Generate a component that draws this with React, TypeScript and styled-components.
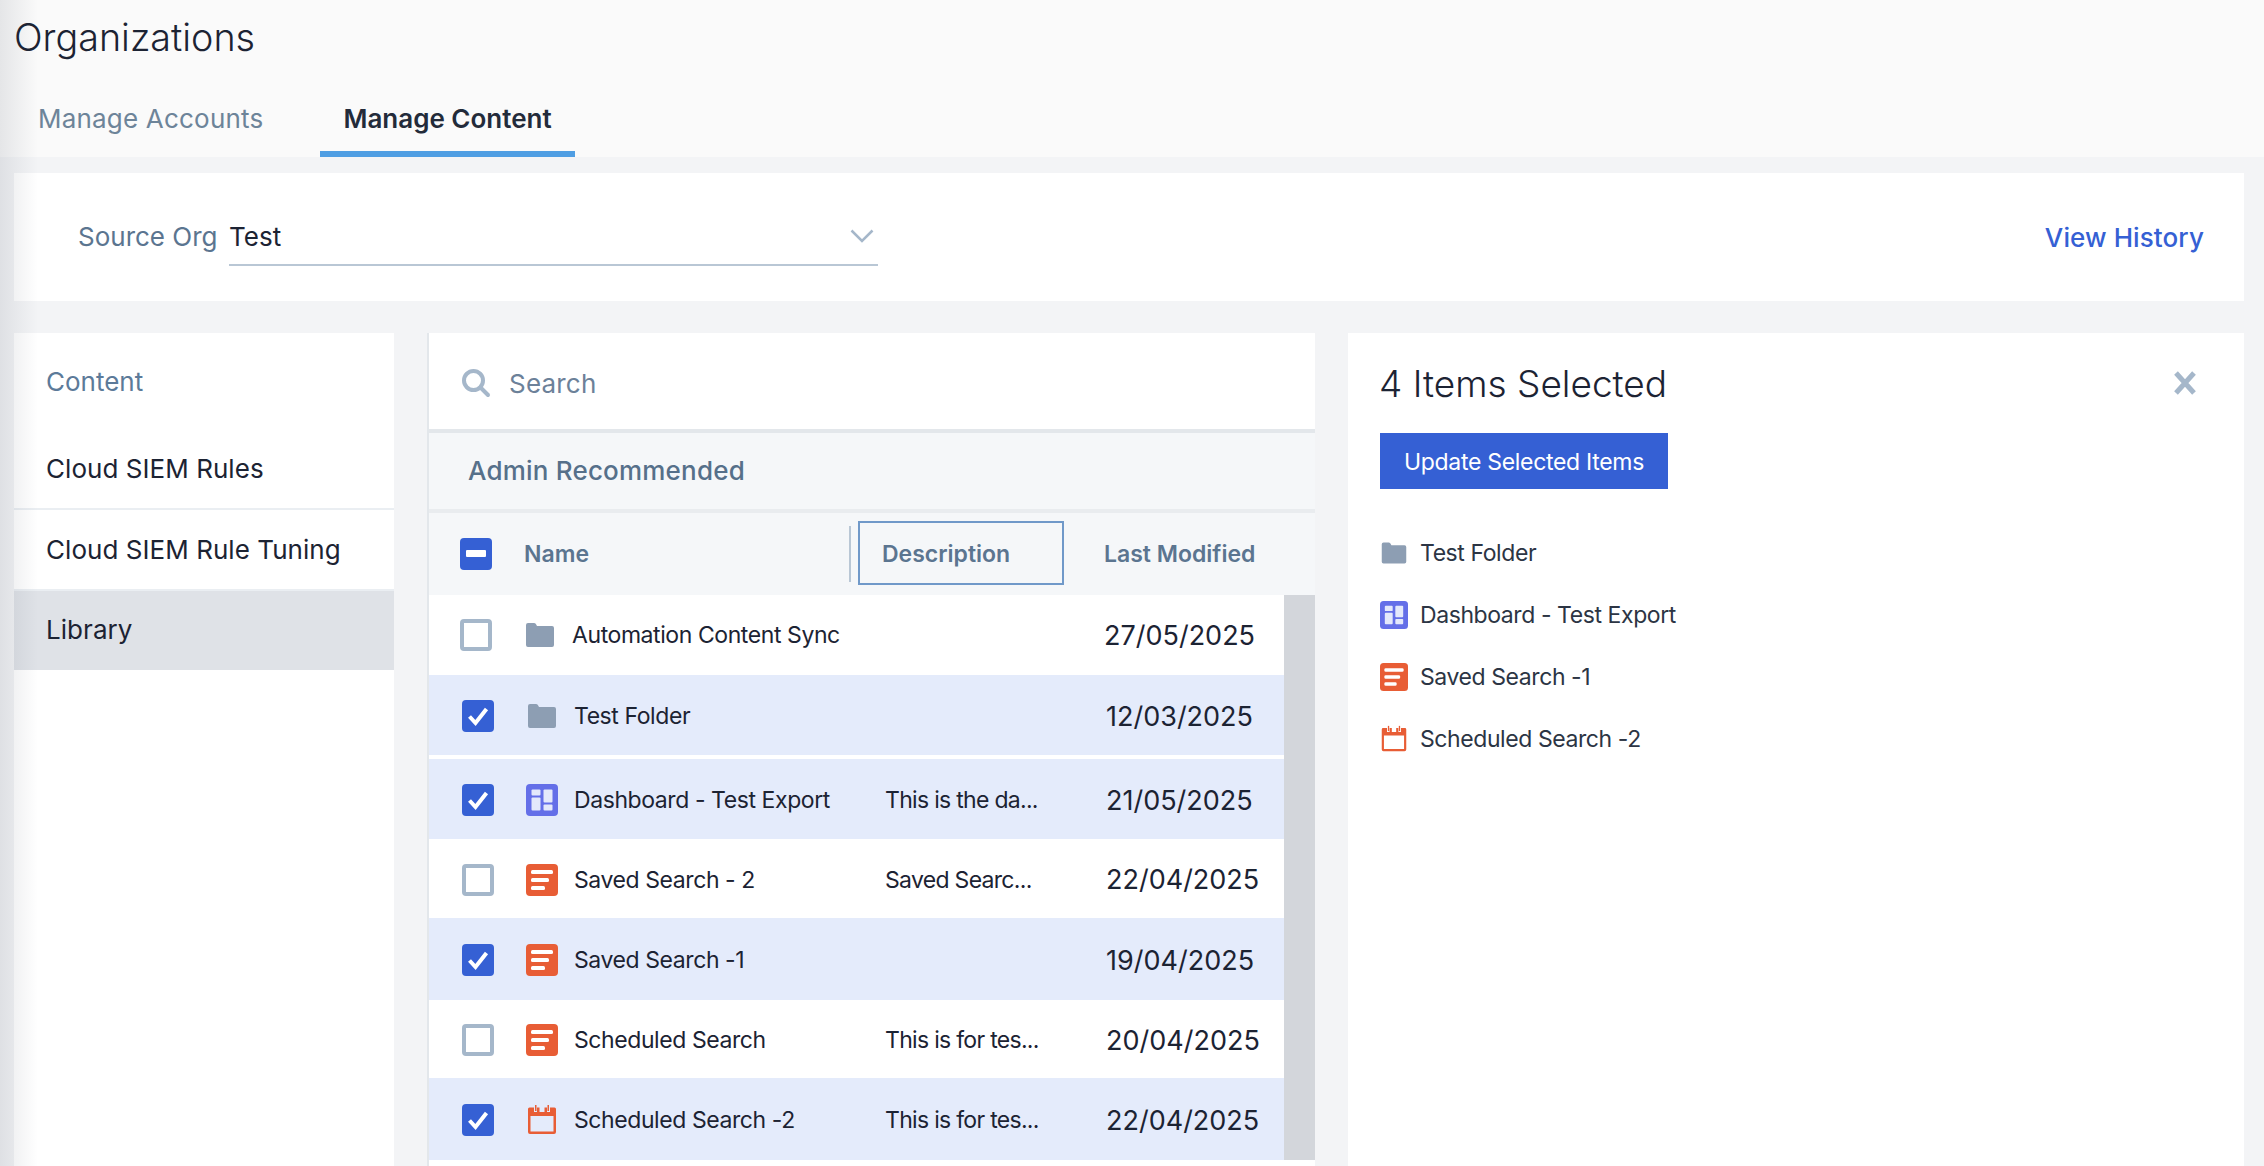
import React from 'react';
import styled, { createGlobalStyle } from 'styled-components';

const GlobalStyle = createGlobalStyle`
    html, body {
        margin: 0;
        padding: 0;
        background: #f3f4f6;
        font-family: 'Inter', 'Liberation Sans', sans-serif;
    }
`;

const Colors = {
    ink: '#1c2333',
    slate: '#5b7590',
    muted: '#a5b7ca',
    blue: '#3560d4',
    tint: '#e4ebfb',
    orange: '#e85d35',
    indigo: '#646fe8',
    folder: '#8d9eb3',
};

const Page = styled.div`
    position: relative;
    width: 2264px;
    height: 1166px;
    overflow: hidden;
    background: #f3f4f6;

    &::before {
        content: '';
        position: absolute;
        top: 0;
        left: 0;
        bottom: 0;
        width: 38px;
        background: linear-gradient(to right, rgba(40, 50, 70, 0.1), rgba(40, 50, 70, 0));
        pointer-events: none;
        z-index: 5;
    }
`;

const Header = styled.header`
    height: 157px;
    box-sizing: border-box;
    background: #fafafa;
    padding-left: 14px;
`;

const Title = styled.h1`
    margin: 0;
    height: 74px;
    line-height: 74px;
    font-size: 37.7px;
    font-weight: 300;
    color: ${Colors.ink};
`;

const Tabs = styled.nav`
    display: flex;
    height: 83px;
    margin-left: 10px;
`;

const Tab = styled.div<{ $active?: boolean }>`
    box-sizing: border-box;
    height: 83px;
    padding: 0 ${(p) => (p.$active ? 23 : 14)}px;
    margin-right: ${(p) => (p.$active ? 0 : 43)}px;
    line-height: 90px;
    font-size: 26px;
    letter-spacing: ${(p) => (p.$active ? 0 : 0.2)}px;
    font-weight: ${(p) => (p.$active ? 600 : 400)};
    color: ${(p) => (p.$active ? '#232b3a' : '#6d8499')};
    border-bottom: 6px solid ${(p) => (p.$active ? '#4f9ee3' : 'transparent')};
`;

const Main = styled.main`
    padding: 16px 20px 0 14px;
`;

const SourceCard = styled.section`
    display: flex;
    align-items: center;
    height: 128px;
    padding: 0 40px 0 64px;
    background: #fff;
`;

const SourceLabel = styled.span`
    width: 151px;
    margin-top: -2px;
    font-size: 26px;
    color: ${Colors.slate};
`;

const Select = styled.div`
    display: flex;
    align-items: center;
    justify-content: space-between;
    box-sizing: border-box;
    width: 649px;
    height: 58px;
    padding-right: 4px;
    border-bottom: 2px solid #b9c7d5;
    font-size: 26px;
    color: ${Colors.ink};
`;

const HistoryLink = styled.a`
    margin-left: auto;
    font-size: 26px;
    font-weight: 500;
    letter-spacing: 0.1px;
    color: ${Colors.blue};
`;

const Columns = styled.div`
    display: flex;
    margin-top: 32px;
    height: 840px;
`;

const Sidebar = styled.aside`
    width: 380px;
    background: #fff;
    margin-right: 33px;
`;

const SidebarTitle = styled.div`
    height: 96px;
    padding: 0 32px;
    line-height: 98px;
    font-size: 26px;
    color: #5c7a99;
`;

const SidebarItem = styled.div<{ $active?: boolean; $divider?: boolean }>`
    box-sizing: border-box;
    height: ${(p) => (p.$divider ? 81 : 79)}px;
    padding: 0 32px;
    line-height: ${(p) => (p.$active ? 78 : 80)}px;
    font-size: 26px;
    letter-spacing: 0.05px;
    color: ${Colors.ink};
    background: ${(p) => (p.$active ? '#dfe2e7' : '#fff')};
    border-bottom: ${(p) => (p.$divider ? '2px solid #eaeef2' : 'none')};
`;

const Center = styled.section`
    width: 888px;
    margin-right: 33px;
    background: #fff;
    border-left: 2px solid #e3e7eb;
    box-sizing: border-box;
`;

const SearchBar = styled.div`
    display: flex;
    align-items: center;
    box-sizing: border-box;
    height: 100px;
    padding: 4px 0 0 32px;
    border-bottom: 4px solid #e3e7eb;
    font-size: 26px;
    color: #6c8199;
`;

const SearchText = styled.span`
    margin-left: 18px;
    letter-spacing: 0.2px;
`;

const SectionBar = styled.div`
    box-sizing: border-box;
    height: 80px;
    padding-left: 39px;
    line-height: 76px;
    background: #f5f7f9;
    border-bottom: 4px solid #e9ecef;
    font-size: 26px;
    letter-spacing: 0.2px;
    font-weight: 500;
    color: #56708a;
`;

const TableHead = styled.div`
    display: flex;
    align-items: center;
    height: 82px;
    padding-left: 31px;
    background: #f5f7f9;
    font-size: 23px;
    font-weight: 600;
    color: ${Colors.slate};
`;

const NameHead = styled.span`
    margin-left: 32px;
    width: 325px;
`;

const ColumnRule = styled.span`
    width: 2px;
    height: 56px;
    background: #b9c7d5;
`;

const DescriptionHead = styled.span`
    box-sizing: border-box;
    width: 206px;
    height: 64px;
    margin: -2px 0 0 7px;
    padding-left: 22px;
    line-height: 62px;
    border: 2px solid #7099c9;
`;

const LastModifiedHead = styled.span`
    margin-left: 40px;
`;

const TableBody = styled.div`
    display: flex;
`;

const Rows = styled.div`
    width: 855px;
`;

const Scrollbar = styled.div`
    width: 31px;
    height: 565px;
    background: #d3d6db;
`;

const Row = styled.div<{ $height: number; $selected: boolean; $gap?: boolean; $first?: boolean }>`
    display: grid;
    grid-template-columns: 64px 48px 311px 221px 1fr;
    align-items: center;
    box-sizing: border-box;
    height: ${(p) => p.$height}px;
    margin-top: ${(p) => (p.$gap ? 4 : 0)}px;
    padding: ${(p) => (p.$first ? '0 0 0 31px' : '2px 0 0 33px')};
    background: ${(p) => (p.$selected ? Colors.tint : '#fff')};
    font-size: 23px;
    letter-spacing: -0.42px;
    color: ${Colors.ink};
`;

const RowDescription = styled.span`
    letter-spacing: -0.7px;
`;

const RowDate = styled.span`
    font-size: 27px;
    letter-spacing: 0;
`;

const CheckBox = styled.span<{ $on?: boolean }>`
    display: flex;
    align-items: center;
    justify-content: center;
    box-sizing: border-box;
    width: 32px;
    height: 32px;
    border-radius: 4px;
    background: ${(p) => (p.$on ? Colors.blue : '#fff')};
    border: ${(p) => (p.$on ? 'none' : `4px solid ${Colors.muted}`)};
`;

const Detail = styled.section`
    flex: 1;
    box-sizing: border-box;
    padding: 0 32px;
    background: #fff;
`;

const DetailHead = styled.div`
    display: flex;
    align-items: center;
    justify-content: space-between;
    height: 100px;
    padding-right: 15px;
`;

const DetailTitle = styled.h2`
    margin: 0 0 0 -1px;
    font-size: 37px;
    font-weight: 300;
    color: ${Colors.ink};
`;

const UpdateButton = styled.button`
    display: block;
    width: 288px;
    height: 56px;
    padding: 2px 0 0;
    border: 0;
    background: ${Colors.blue};
    color: #fff;
    font-family: inherit;
    font-size: 23px;
    letter-spacing: -0.3px;
`;

const SelectedList = styled.ul`
    margin: 33px 0 0;
    padding: 0;
    list-style: none;
`;

const SelectedItem = styled.li`
    display: flex;
    align-items: center;
    height: 62px;
    font-size: 23px;
    letter-spacing: -0.42px;
    color: #2c3544;
`;

const SelectedIcon = styled.span`
    display: flex;
    width: 40px;
`;

type Kind = 'folder' | 'dashboard' | 'saved' | 'scheduled';

const ItemIcon = ({ kind, size = 32 }: { kind: Kind; size?: number }) => {
    if (kind === 'folder') {
        return (
            <svg width={size} height={size} viewBox="0 0 32 32" fill={Colors.folder}>
                <path d="M2 6a2 2 0 0 1 2-2h6c1.500 0 2 1 3 3h15a2 2 0 0 1 2 2v17a2 2 0 0 1-2 2H4a2 2 0 0 1-2-2z" />
            </svg>
        );
    }
    if (kind === 'dashboard') {
        return (
            <svg width={size} height={size} viewBox="0 0 32 32">
                <rect width="32" height="32" rx="4" fill={Colors.indigo} />
                <g fill="#e4e9fb">
                    <rect x="5.500" y="5.500" width="9" height="6" rx="1" />
                    <rect x="17.500" y="5.500" width="9" height="13" rx="1" />
                    <rect x="5.500" y="13.500" width="9" height="13" rx="1" />
                    <rect x="17.500" y="20.500" width="9" height="6" rx="1" />
                </g>
            </svg>
        );
    }
    if (kind === 'saved') {
        return (
            <svg width={size} height={size} viewBox="0 0 32 32">
                <rect width="32" height="32" rx="4" fill={Colors.orange} />
                <g fill="#fff">
                    <rect x="5" y="6" width="22" height="4" rx="1.500" />
                    <rect x="5" y="14" width="18" height="4" rx="1.500" />
                    <rect x="5" y="22" width="14" height="4" rx="1.500" />
                </g>
            </svg>
        );
    }
    return (
        <svg width={size} height={size} viewBox="0 0 32 32" fill={Colors.orange}>
            <path d="M2 5a1.500 1.500 0 0 1 1.500-1.500H8V8h3V3.500h2.500V8h5V3.500H21V8h3V3.500h4.500A1.500 1.500 0 0 1 30 5v23a2 2 0 0 1-2 2H4a2 2 0 0 1-2-2zm2.500 7v15.500h23V12z" />
            <rect x="9" y="1" width="1.500" height="6" />
            <rect x="21.500" y="1" width="1.500" height="6" />
        </svg>
    );
};

const rows: { name: string; description?: string; date: string; kind: Kind; on: boolean; height: number; gap?: boolean }[] = [
    { name: 'Automation Content Sync', date: '27/05/2025', kind: 'folder', on: false, height: 80 },
    { name: 'Test Folder', date: '12/03/2025', kind: 'folder', on: true, height: 80 },
    { name: 'Dashboard - Test Export', description: 'This is the da...', date: '21/05/2025', kind: 'dashboard', on: true, height: 80, gap: true },
    { name: 'Saved Search - 2', description: 'Saved Searc...', date: '22/04/2025', kind: 'saved', on: false, height: 79 },
    { name: 'Saved Search -1', date: '19/04/2025', kind: 'saved', on: true, height: 82 },
    { name: 'Scheduled Search', description: 'This is for tes...', date: '20/04/2025', kind: 'saved', on: false, height: 78 },
    { name: 'Scheduled Search -2', description: 'This is for tes...', date: '22/04/2025', kind: 'scheduled', on: true, height: 82 },
];

const selected: { name: string; kind: Kind }[] = [
    { name: 'Test Folder', kind: 'folder' },
    { name: 'Dashboard - Test Export', kind: 'dashboard' },
    { name: 'Saved Search -1', kind: 'saved' },
    { name: 'Scheduled Search -2', kind: 'scheduled' },
];

const Tick = () => (
    <svg width="24" height="22" viewBox="0 0 24 22" fill="none" stroke="#fff" strokeWidth="4">
        <path d="M3.500 11.500 9.500 18 20.500 4" />
    </svg>
);

export default function App() {
    return (
        <Page>
            <GlobalStyle />
            <Header>
                <Title>Organizations</Title>
                <Tabs>
                    <Tab>Manage Accounts</Tab>
                    <Tab $active>Manage Content</Tab>
                </Tabs>
            </Header>
            <Main>
                <SourceCard>
                    <SourceLabel>Source Org</SourceLabel>
                    <Select>
                        Test
                        <svg width="24" height="14" viewBox="0 0 24 14" fill="none" stroke={Colors.muted} strokeWidth="2.500">
                            <path d="M1.500 1.500 12 12 22.500 1.500" />
                        </svg>
                    </Select>
                    <HistoryLink>View History</HistoryLink>
                </SourceCard>
                <Columns>
                    <Sidebar>
                        <SidebarTitle>Content</SidebarTitle>
                        <SidebarItem $divider>Cloud SIEM Rules</SidebarItem>
                        <SidebarItem $divider>Cloud SIEM Rule Tuning</SidebarItem>
                        <SidebarItem $active>Library</SidebarItem>
                    </Sidebar>
                    <Center>
                        <SearchBar>
                            <svg width="30" height="30" viewBox="0 0 30 30" fill="none" stroke={Colors.muted} strokeWidth="4">
                                <circle cx="12.500" cy="12.500" r="9.500" />
                                <path d="M19.500 19.500 27 27" strokeLinecap="round" />
                            </svg>
                            <SearchText>Search</SearchText>
                        </SearchBar>
                        <SectionBar>Admin Recommended</SectionBar>
                        <TableHead>
                            <CheckBox $on>
                                <svg width="20" height="8" viewBox="0 0 20 8">
                                    <rect width="20" height="7" rx="1" fill="#fff" />
                                </svg>
                            </CheckBox>
                            <NameHead>Name</NameHead>
                            <ColumnRule />
                            <DescriptionHead>Description</DescriptionHead>
                            <LastModifiedHead>Last Modified</LastModifiedHead>
                        </TableHead>
                        <TableBody>
                            <Rows>
                                {rows.map((row, index) => (
                                    <Row key={row.name} $height={row.height} $selected={row.on} $gap={row.gap} $first={index === 0}>
                                        <CheckBox $on={row.on}>{row.on && <Tick />}</CheckBox>
                                        <ItemIcon kind={row.kind} />
                                        <span>{row.name}</span>
                                        <RowDescription>{row.description}</RowDescription>
                                        <RowDate>{row.date}</RowDate>
                                    </Row>
                                ))}
                            </Rows>
                            <Scrollbar />
                        </TableBody>
                    </Center>
                    <Detail>
                        <DetailHead>
                            <DetailTitle>4 Items Selected</DetailTitle>
                            <svg width="24" height="26" viewBox="0 0 24 26" fill="none" stroke={Colors.muted} strokeWidth="5">
                                <path d="M3 3l18 20M21 3 3 23" />
                            </svg>
                        </DetailHead>
                        <UpdateButton>Update Selected Items</UpdateButton>
                        <SelectedList>
                            {selected.map((item) => (
                                <SelectedItem key={item.name}>
                                    <SelectedIcon>
                                        <ItemIcon kind={item.kind} size={28} />
                                    </SelectedIcon>
                                    {item.name}
                                </SelectedItem>
                            ))}
                        </SelectedList>
                    </Detail>
                </Columns>
            </Main>
        </Page>
    );
}
